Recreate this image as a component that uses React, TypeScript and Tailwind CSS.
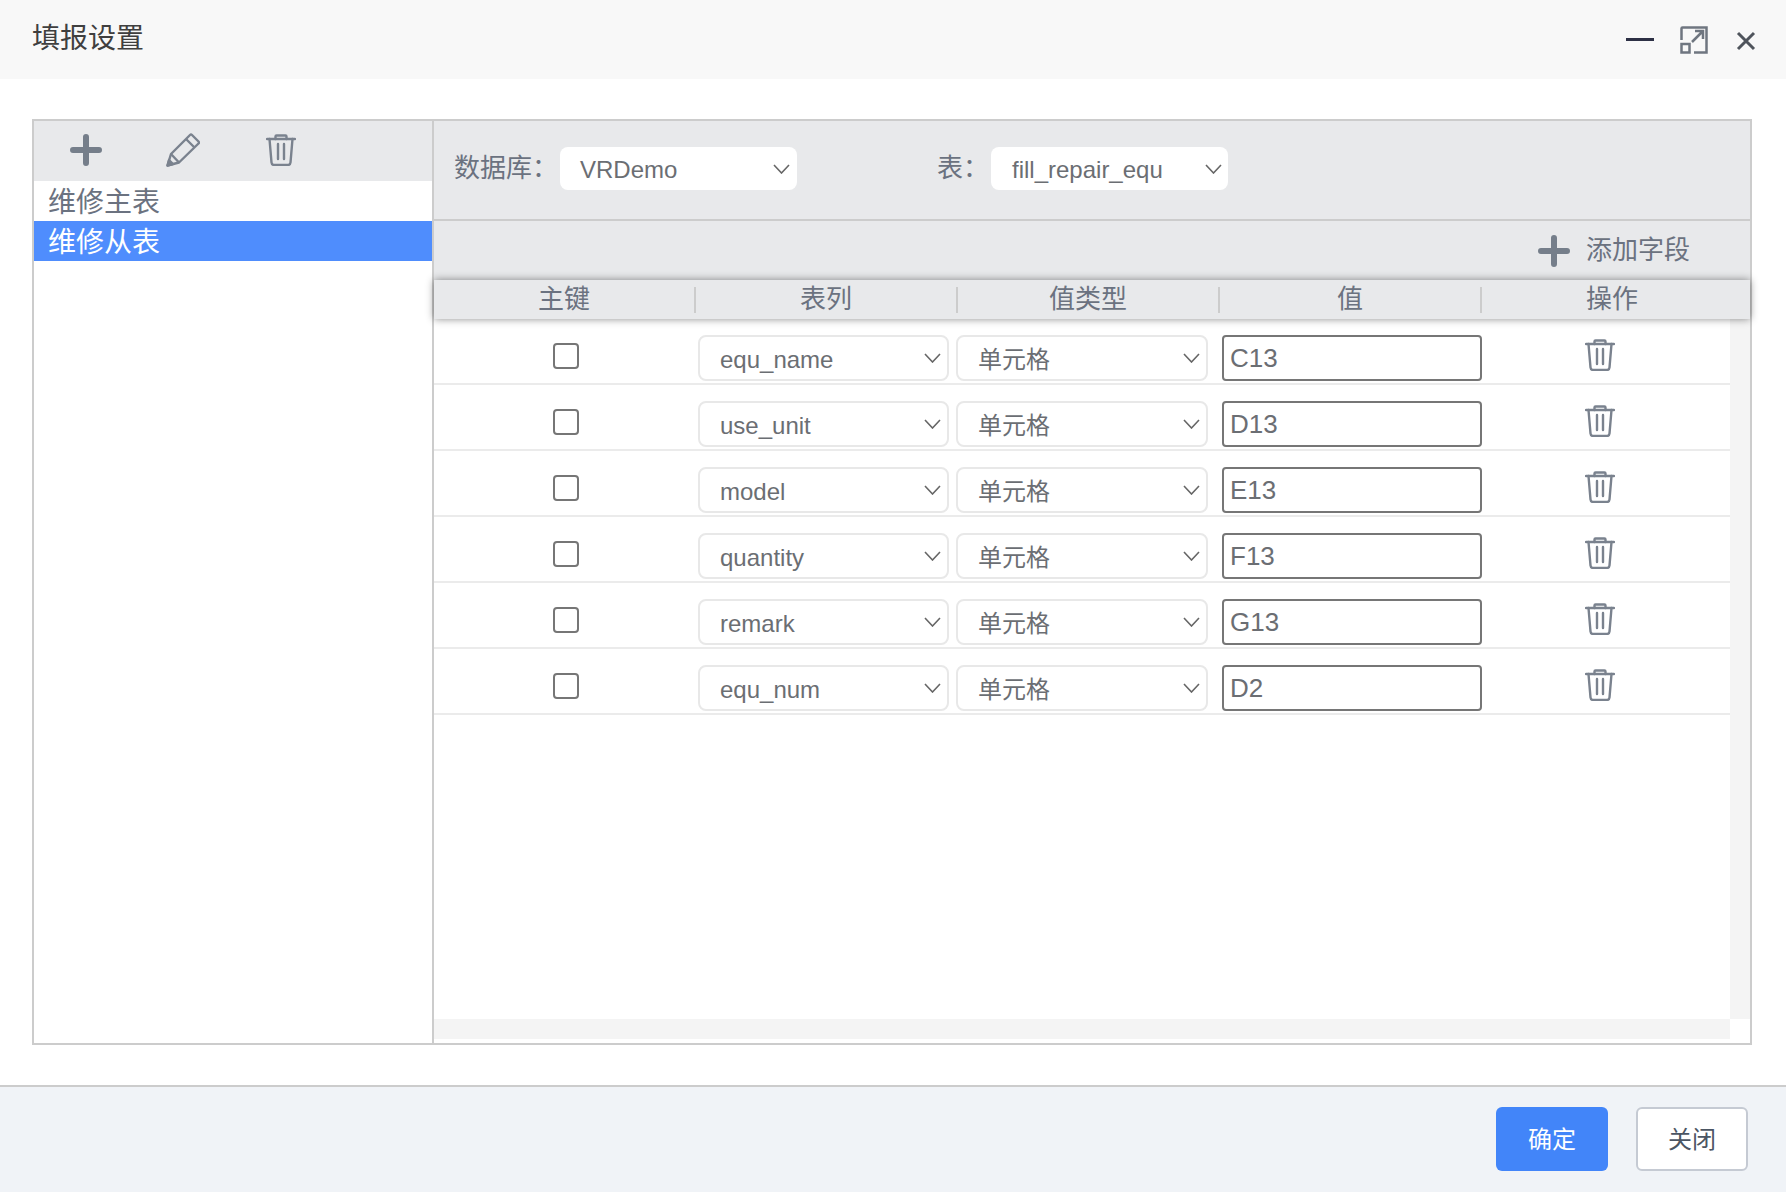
import React from 'react';

const FONT = "font-['Liberation_Sans','Noto_Sans_CJK_SC',sans-serif]";

const fields = [
  { column: 'equ_name', value: 'C13' },
  { column: 'use_unit', value: 'D13' },
  { column: 'model', value: 'E13' },
  { column: 'quantity', value: 'F13' },
  { column: 'remark', value: 'G13' },
  { column: 'equ_num', value: 'D2' },
];

const headers = ['主键', '表列', '值类型', '值', '操作'];

const PlusIcon = () => (
  <svg width="32" height="32" viewBox="0 0 32 32" fill="none" stroke="#757e8a" strokeWidth="6" strokeLinecap="round">
    <path d="M16 3v26M3 16h26" />
  </svg>
);

const PencilIcon = () => (
  <svg width="34" height="34" viewBox="0 0 34 34" fill="none" stroke="#7a828e" strokeWidth="2.400" strokeLinejoin="round">
    <path d="M1.500 32.500 5 21 24 2q1-1 2 0l6.500 6.500q1 1 0 2L13 29.500z" />
    <path d="M20 6l8.500 8.500M5 21l8 8.500" />
    <path d="M1.500 32.500 3 27l4 4z" fill="#7a828e" />
  </svg>
);

const TrashIcon = () => (
  <svg width="30" height="32" viewBox="0 0 30 32" fill="none" stroke="#7a828e" strokeWidth="2.400" strokeLinecap="round" strokeLinejoin="round">
    <path d="M1 5h28" />
    <path d="M9.500 5V2.500q0-1 1-1h9q1 0 1 1V5" />
    <path d="M3.500 5l2 23.500q.2 2.500 2.700 2.500h13.600q2.500 0 2.700-2.500L26.500 5" />
    <path d="M12 10v15M18 10v15" />
  </svg>
);

const ExpandIcon = () => (
  <svg width="28" height="28" viewBox="0 0 28 28" fill="none" stroke="#6f7680" strokeWidth="2.500">
    <path d="M1.500 14V2.500q0-1 1-1h24v25H14" />
    <path d="M1.500 18h8v8.500h-8z" />
    <path d="M12 16 23 5M15 5h8v8" />
  </svg>
);

const Chevron = () => (
  <svg width="17" height="10" viewBox="0 0 17 10" fill="none" stroke="#666" strokeWidth="1.600">
    <path d="M1 1l7.500 8L16 1" />
  </svg>
);

const Select = ({ text, className }: { text: string; className: string }) => (
  <div className={`flex items-center justify-between rounded-lg border-2 border-[#e8e8e8] bg-white pl-[20px] pr-[6px] text-[24px] text-[#6b6e73] ${className}`}>
    <span className="pt-[3px]">{text}</span>
    <Chevron />
  </div>
);

const App = () => {
  return (
    <div className={`flex h-[1192px] w-[1786px] flex-col bg-white ${FONT}`}>
      {/* Title bar */}
      <div className="flex h-[79px] items-center justify-between bg-[#f8f8f8] pl-[32px] pr-[30px]">
        <span className="pb-[2px] text-[28px] text-[#3f3f3f]">填报设置</span>
        <div className="flex items-center">
          <div className="h-[3px] w-[28px] bg-[#2d3045]" />
          <div className="ml-[26px] mt-[1px]"><ExpandIcon /></div>
          <svg className="ml-[28px] mt-[2px]" width="20" height="20" viewBox="0 0 20 20" fill="none" stroke="#4f545c" strokeWidth="3">
            <path d="M2 2l16 16M18 2 2 18" />
          </svg>
        </div>
      </div>

      <div className="flex-1 px-[32px] pt-[40px]">
        <div className="flex h-[926px] w-[1720px] border-2 border-[#cccccc]">
          {/* Left list */}
          <div className="w-[400px] border-r-2 border-[#cccccc]">
            <div className="flex h-[60px] items-center bg-[#e8e9eb] pb-[2px]">
              <div className="ml-[36px]"><PlusIcon /></div>
              <div className="ml-[64px]"><PencilIcon /></div>
              <div className="ml-[66px]"><TrashIcon /></div>
            </div>
            <div className="flex h-[40px] items-center pl-[14px] pt-[4px] text-[28px] text-[#6b7280]">维修主表</div>
            <div className="flex h-[40px] items-center bg-[#4f8dfd] pl-[14px] pt-[4px] text-[28px] text-white">维修从表</div>
          </div>

          {/* Right panel */}
          <div className="flex flex-1 flex-col">
            <div className="flex h-[100px] border-b-2 border-[#cccccc] bg-[#e8e9eb] pl-[20px] pt-[26px] text-[26px] text-[#6b7280]">
              <div className="flex h-[43px] w-[106px] items-center">数据库：</div>
              <div className="flex h-[43px] w-[237px] items-center justify-between rounded-lg bg-white pl-[20px] pr-[7px] text-[24px] text-[#6b6e73]">
                <span className="pt-[2px]">VRDemo</span>
                <Chevron />
              </div>
              <div className="ml-[140px] flex h-[43px] w-[54px] items-center">表：</div>
              <div className="flex h-[43px] w-[237px] items-center justify-between rounded-lg bg-white pl-[21px] pr-[6px] text-[24px] text-[#6b6e73]">
                <span className="pt-[2px]">fill_repair_equ</span>
                <Chevron />
              </div>
            </div>

            <div className="flex h-[59px] items-center justify-end bg-[#e8e9eb] pr-[60px] text-[26px] text-[#6b7280]">
              <PlusIcon />
              <span className="ml-[16px]">添加字段</span>
            </div>

            <div className="relative z-10 flex h-[39px] items-center bg-[#e8e9eb] text-[26px] text-[#6b7280] shadow-[0_0_8px_rgba(0,0,0,0.45)]">
              {headers.map((label, index) => (
                <div
                  key={label}
                  className={`flex h-[26px] w-[262px] items-center justify-center ${index < 4 ? 'border-r-2 border-[#cccccc]' : 'pr-[2px]'}`}
                >
                  {label}
                </div>
              ))}
            </div>

            <div className="flex h-[700px]">
              <div className="w-[1296px]">
                {fields.map((field) => (
                  <div key={field.column} className="flex h-[66px] items-start border-b-2 border-[#ebebeb] pt-[16px]">
                    <div className="flex w-[261px] justify-center pl-[3px] pt-[8px]">
                      <input type="checkbox" readOnly className="h-[26px] w-[26px] appearance-none rounded border-2 border-[#767676] bg-white" />
                    </div>
                    <Select text={field.column} className="ml-[3px] h-[46px] w-[251px]" />
                    <Select text="单元格" className="ml-[7px] h-[46px] w-[252px]" />
                    <input
                      readOnly
                      value={field.value}
                      className="ml-[14px] h-[46px] w-[260px] rounded border-2 border-[#767676] bg-white pl-[6px] text-[26px] text-[#6b6e73]"
                    />
                    <div className="ml-[103px] mt-[4px]"><TrashIcon /></div>
                  </div>
                ))}
              </div>
              <div className="w-[20px] bg-[#f4f4f4]" />
            </div>
            <div className="h-[20px] w-[1296px] bg-[#f4f4f4]" />
          </div>
        </div>
      </div>

      {/* Footer */}
      <div className="flex h-[107px] items-start justify-end gap-[28px] border-t-2 border-[#cccccc] bg-[#f0f3f7] pr-[38px] pt-[20px] text-[24px]">
        <button className="h-[64px] w-[112px] rounded-md bg-[#4285f9] pt-[2px] text-white">确定</button>
        <button className="h-[64px] w-[112px] rounded-md border-2 border-[#c5cad3] bg-white pt-[2px] text-[#4b5563]">关闭</button>
      </div>
    </div>
  );
};

export default App;
